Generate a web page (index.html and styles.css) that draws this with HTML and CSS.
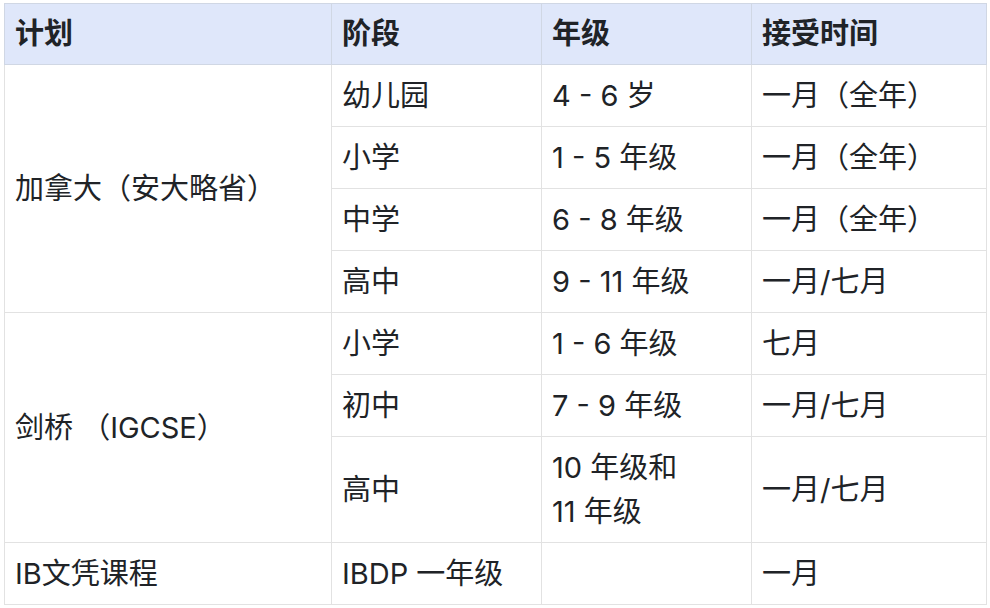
FILE: index.html
```html
<!DOCTYPE html>
<html lang="zh">
<head>
<meta charset="utf-8">
<link rel="stylesheet" href="styles.css">
</head>
<body>
<table class="plan-table">
  <colgroup>
    <col class="c1"><col class="c2"><col class="c3"><col class="c4">
  </colgroup>
  <thead>
    <tr><th>计划</th><th>阶段</th><th>年级</th><th>接受时间</th></tr>
  </thead>
  <tbody>
    <tr><td rowspan="4">加拿大（安大略省）</td><td>幼儿园</td><td>4 - 6 岁</td><td>一月（全年）</td></tr>
    <tr><td>小学</td><td>1 - 5 年级</td><td>一月（全年）</td></tr>
    <tr><td>中学</td><td>6 - 8 年级</td><td>一月（全年）</td></tr>
    <tr><td>高中</td><td>9 - 11 年级</td><td>一月/七月</td></tr>
    <tr><td rowspan="3">剑桥 （IGCSE）</td><td>小学</td><td>1 - 6 年级</td><td>七月</td></tr>
    <tr><td>初中</td><td>7 - 9 年级</td><td>一月/七月</td></tr>
    <tr><td>高中</td><td>10 年级和<br>11 年级</td><td>一月/七月</td></tr>
    <tr><td>IB文凭课程</td><td>IBDP 一年级</td><td></td><td>一月</td></tr>
  </tbody>
</table>
</body>
</html>
```
FILE: styles.css
```css
html, body {
  margin: 0;
  padding: 0;
  background: #ffffff;
}
body {
  padding: 3px 0 0 4px;
  font-family: "Inter", "Noto Sans CJK SC", sans-serif;
  color: #202327;
}
.plan-table {
  border-collapse: collapse;
  width: 982px;
  table-layout: fixed;
  font-size: 29px;
  line-height: 44px;
  border: 1px solid #d6d6d6;
}
.c1 { width: 327px; }
.c2 { width: 210px; }
.c3 { width: 210px; }
.c4 { width: 235px; }
.plan-table th,
.plan-table td {
  padding: 9px 10px 8px;
  border: 1px solid #e2e2e2;
  text-align: left;
  vertical-align: middle;
  font-weight: 400;
}
.plan-table thead th {
  background: #dfe7fa;
  font-weight: 700;
  border-color: #d0d7e4;
  padding: 8px 10px;
}
```
